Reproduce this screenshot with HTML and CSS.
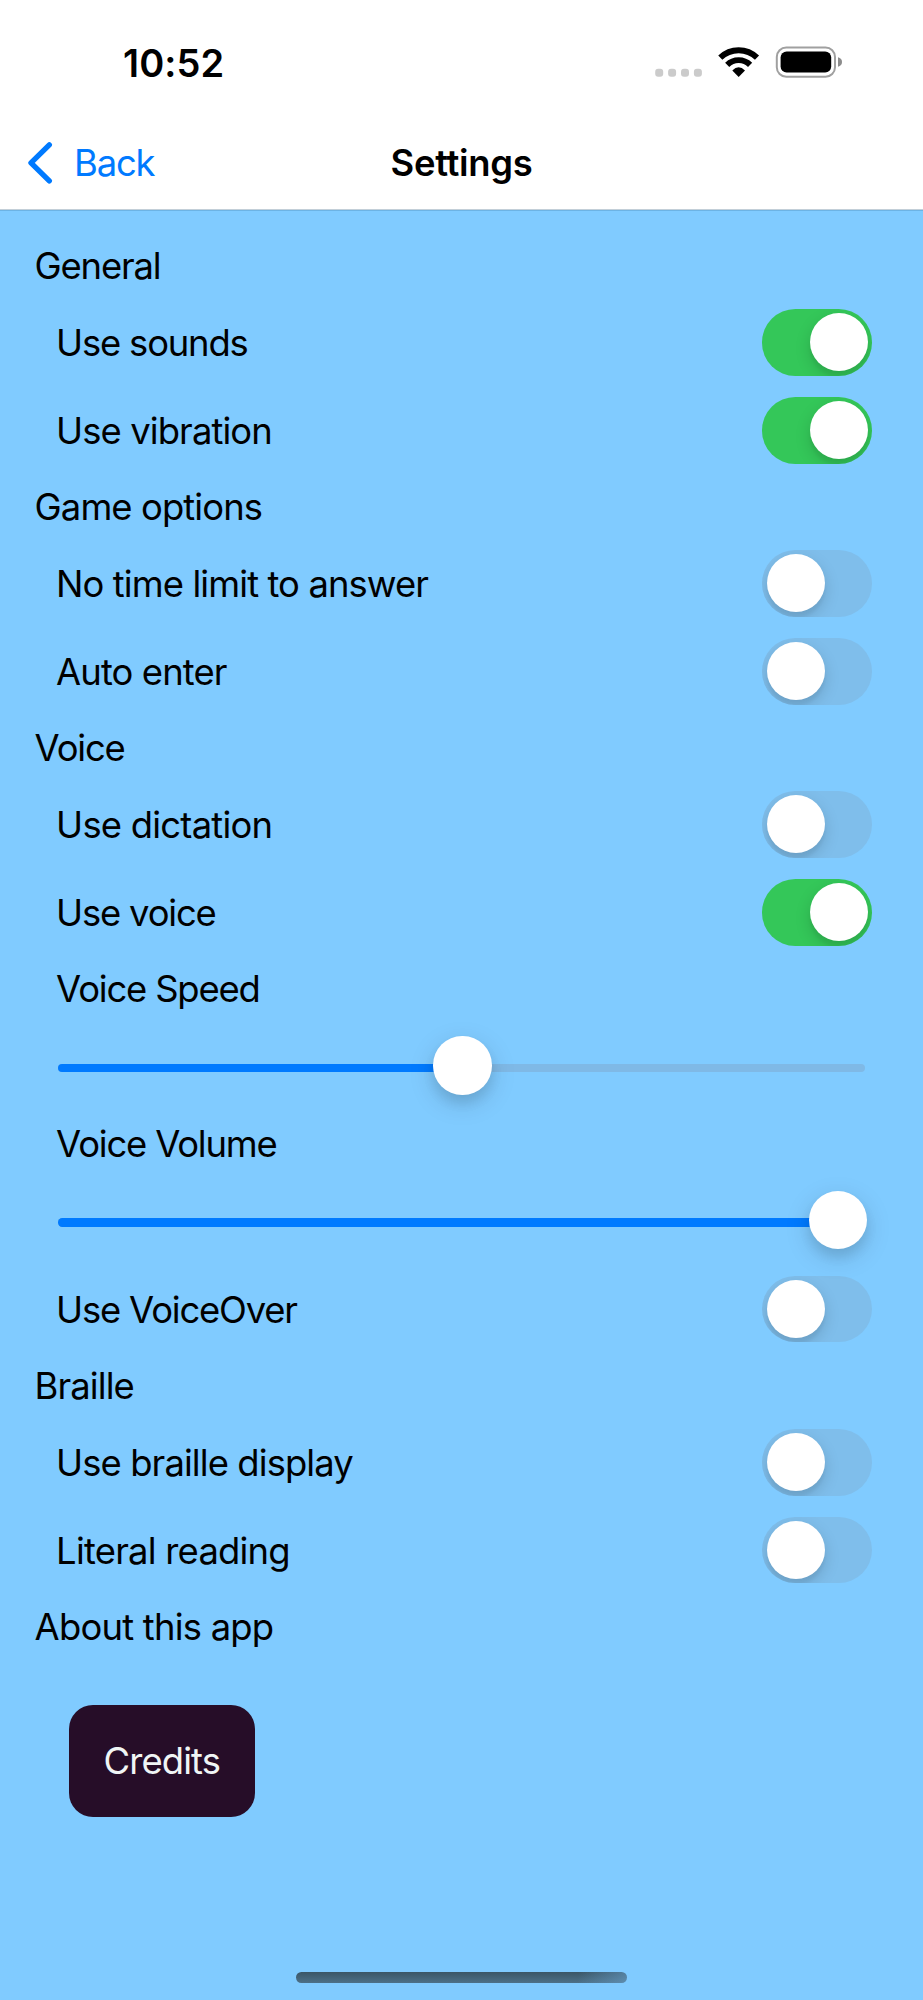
FILE: index.html
```html
<!DOCTYPE html>
<html lang="en">
<head>
<meta charset="utf-8">
<title>Settings</title>
<link rel="stylesheet" href="styles.css">
</head>
<body>
<div class="screen">
  <header class="top">
    <div class="status">
      <span class="time">10:52</span>
      <svg class="status-icons" width="190" height="34" viewBox="0 0 190 34">
        <g fill="#cbcbcb">
          <rect x="0.2" y="23.8" width="8" height="8" rx="3"/>
          <rect x="13.1" y="23.8" width="8" height="8" rx="3"/>
          <rect x="26" y="23.8" width="8" height="8" rx="3"/>
          <rect x="38.9" y="23.8" width="8" height="8" rx="3"/>
        </g>
        <g fill="none" stroke="#000" stroke-width="5.9">
          <path d="M65.3 12.6A26.4 26.4 0 0 1 102 12.6"/>
          <path d="M72.2 19.8A16.3 16.3 0 0 1 95.1 19.8"/>
        </g>
        <path d="M77.3 25.6Q83.65 19 90 25.6L83.65 32Z"/>
        <rect x="121.8" y="2.4" width="58.2" height="29.4" rx="9.5" fill="none" stroke="#a0a0a0" stroke-width="2"/>
        <rect x="125.6" y="6.6" width="50.6" height="21" rx="6"/>
        <path d="M183 12.2Q187 13.3 187 17T183 21.8Z" fill="#8c8c8c"/>
      </svg>
    </div>
    <nav class="nav">
      <a class="back">
        <svg width="26" height="46" viewBox="0 0 26 46"><path d="M22.3 4.8L4 22.8L22.3 40.8" fill="none" stroke="#007aff" stroke-width="5.4" stroke-linecap="round" stroke-linejoin="round"/></svg>
        <span class="tight">Back</span>
      </a>
      <h1 class="title">Settings</h1>
    </nav>
  </header>
  <main class="list">
    <h2 class="heading tight">General</h2>
    <div class="row"><span class="tight">Use sounds</span><i class="toggle on"></i></div>
    <div class="row"><span class="snug">Use vibration</span><i class="toggle on"></i></div>
    <h2 class="heading snug">Game options</h2>
    <div class="row"><span class="snug">No time limit to answer</span><i class="toggle"></i></div>
    <div class="row"><span class="snug">Auto enter</span><i class="toggle"></i></div>
    <h2 class="heading tight">Voice</h2>
    <div class="row"><span>Use dictation</span><i class="toggle"></i></div>
    <div class="row"><span class="tight">Use voice</span><i class="toggle on"></i></div>
    <div class="label tight">Voice Speed</div>
    <div class="slider"><div class="track"><i class="fill" style="width:50.2%"></i><i class="thumb" style="left:404.7px"></i></div></div>
    <div class="label tight">Voice Volume</div>
    <div class="slider"><div class="track"><i class="fill" style="width:96%"></i><i class="thumb" style="left:780px"></i></div></div>
    <div class="row"><span class="tight">Use VoiceOver</span><i class="toggle"></i></div>
    <h2 class="heading snug">Braille</h2>
    <div class="row"><span class="snug">Use braille display</span><i class="toggle"></i></div>
    <div class="row"><span>Literal reading</span><i class="toggle"></i></div>
    <h2 class="heading">About this app</h2>
    <button class="credits snug">Credits</button>
  </main>
  <footer class="home"><i class="home-bar"></i></footer>
</div>
</body>
</html>
```
FILE: styles.css
```css
* { box-sizing: border-box; }
body { margin: 0; font-family: Inter, sans-serif; font-size: 36.4px; letter-spacing: -0.77px; color: #000; }
.screen { width: 923px; height: 2000px; background: #80cbff; display: flex; flex-direction: column; overflow: hidden; }
.snug { letter-spacing: -0.9px; }
.tight { letter-spacing: -1.18px; }
.top { height: 210px; flex: none; background: #fff; border-bottom: 1px solid #c3cfd8; }
.status { height: 117px; padding: 45px 80px 0 123px; display: flex; justify-content: space-between; align-items: flex-start; }
.time { font-size: 38px; font-weight: 600; line-height: 36px; letter-spacing: 0.1px; }
.status-icons { margin-right: -2px; }
.nav { height: 91px; display: grid; grid-template-columns: 1fr auto 1fr; align-items: center; }
.back { display: flex; align-items: center; gap: 21px; padding-left: 27px; color: #007aff; }
.title { margin: 0; font-size: 36.4px; font-weight: 600; line-height: 44px; letter-spacing: -0.3px; }
.list { padding: 34.1px 51.2px 0 34.6px; display: flex; flex-direction: column; gap: 21.46px; flex: 1; box-shadow: inset 0 1px #6cb3e4; }
.heading { margin: 0; font-size: inherit; font-weight: 400; line-height: 44.6px; height: 43.65px; }
.label { line-height: 44.6px; height: 43.65px; padding-left: 21.5px; }
.row { height: 66.5px; padding-left: 21.5px; display: flex; align-items: center; justify-content: space-between; }
.row span { padding-top: 1.4px; }
.toggle { width: 109.4px; height: 66.5px; border-radius: 33.3px; padding: 4.1px; background: #7fbeeb; display: flex; overflow: hidden; }
.toggle::before { content: ""; width: 58.2px; height: 58.2px; border-radius: 50%; background: #fff; box-shadow: 0 6px 16px rgba(0,0,0,.15), 0 6px 3px rgba(0,0,0,.04); }
.toggle.on { background: #34c759; justify-content: flex-end; }
.slider { height: 67.9px; padding: 31.5px 6.8px 0 23.4px; }
.track { position: relative; height: 8.4px; border-radius: 4.2px; background: #7fb9e6; }
.fill { display: block; height: 100%; border-radius: 4.2px 0 0 4.2px; background: #007aff; }
.thumb { position: absolute; top: 1.7px; width: 58.4px; height: 58.4px; margin: -29.2px; border-radius: 50%; background: #fff; box-shadow: 0 8px 26px rgba(0,0,0,.15), 0 8px 12px rgba(0,0,0,.08); }
.credits { align-self: flex-start; margin: 34.5px 0 0 34.4px; width: 185.7px; height: 112.3px; padding: 1px 0 0; border: 0; border-radius: 24px; background: #260d28; color: #f0f5f5; font-family: inherit; font-size: inherit; }
.home { height: 28px; flex: none; padding-left: 296px; }
.home-bar { display: block; width: 331px; height: 10.7px; border-radius: 5.4px; background: linear-gradient(100deg, transparent 85%, rgba(110,170,215,.5) 100%), linear-gradient(#3b5666, #4c7088); }
```
